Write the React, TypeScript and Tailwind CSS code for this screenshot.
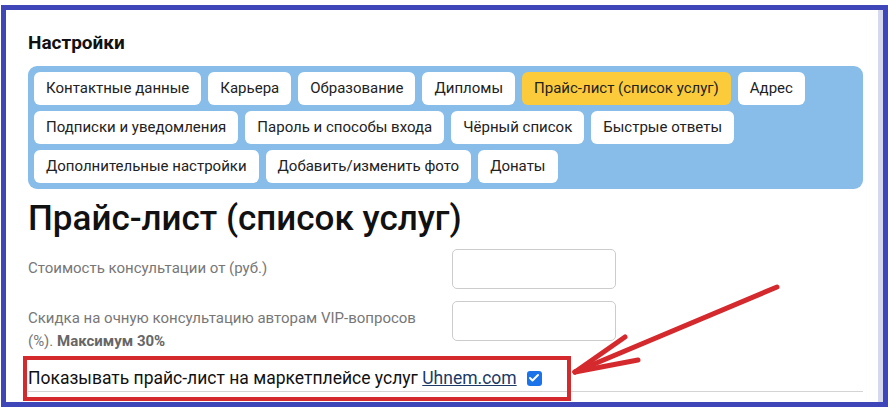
import { Check } from 'lucide-react';

const tabs = [
  ['Контактные данные', 'Карьера', 'Образование', 'Дипломы', 'Прайс-лист (список услуг)', 'Адрес'],
  ['Подписки и уведомления', 'Пароль и способы входа', 'Чёрный список', 'Быстрые ответы'],
  ['Дополнительные настройки', 'Добавить/изменить фото', 'Донаты'],
];

const active = 'Прайс-лист (список услуг)';

const App = () => {
  return (
    <div className="relative w-[888px] h-[407px] overflow-hidden bg-white font-['Roboto',sans-serif]">
      <div className="ml-[1px] mt-[5px] w-[887px] h-[402px] border-[5px] border-[#3f47b8] bg-white">
        <div className="h-full border-r-[5px] border-[#d6d8ee] pl-[22px] pr-[14px] pt-[20px]">
          <h2 className="text-[19px] font-bold text-[#111] leading-[26px]">Настройки</h2>

          {/* settings tabs */}
          <div className="mt-[10px] flex flex-col gap-[6px] rounded-[9px] bg-[#87bde8] p-[6px] w-[835px]">
            {tabs.map((row, i) => (
              <div key={i} className="flex gap-[7px]">
                {row.map((t) => (
                  <div
                    key={t}
                    className={
                      t === active
                        ? 'h-[33px] flex items-center rounded-[6px] bg-[#fbcb3c] px-[12px] text-[15px] text-[#222]'
                        : 'h-[33px] flex items-center rounded-[6px] bg-white px-[12px] text-[15px] text-[#222]'
                    }
                  >
                    {t}
                  </div>
                ))}
              </div>
            ))}
          </div>

          <h1 className="mt-[10px] text-[35px] font-medium leading-[40px] text-[#111]">Прайс-лист (список услуг)</h1>

          <div className="mt-[10px] flex w-[835px]">
            <div className="w-[424px] pt-[8px] text-[15px] leading-[22px] text-[#777]">
              Стоимость консультации от (руб.)
            </div>
            <input className="w-[164px] h-[40px] rounded-[5px] border border-[#ccc] bg-white" />
          </div>

          <div className="mt-[12px] flex w-[835px]">
            <div className="w-[424px] pt-[6px] text-[15px] leading-[23px] text-[#777]">
              <div>Скидка на очную консультацию авторам VIP-вопросов</div>
              <div>
                (%). <b className="text-[#666]">Максимум 30%</b>
              </div>
            </div>
            <input className="w-[164px] h-[40px] rounded-[5px] border border-[#ccc] bg-white" />
          </div>

          <div className="mt-[13px] flex w-[835px] items-center border-b border-[#d4d4d4] pb-[1px] text-[17.5px] leading-[24px] text-[#111]">
            <span>
              Показывать прайс-лист на маркетплейсе услуг{' '}
              <a className="text-[#1b3a66] underline">Uhnem.com</a>
            </span>
            <span className="ml-[10px] flex h-[15px] w-[15px] items-center justify-center rounded-[3px] bg-[#1a73e8]">
              <Check className="h-[12px] w-[12px] text-white" strokeWidth={4} />
            </span>
          </div>
        </div>
      </div>

      {/* highlight box and arrow */}
      <div className="absolute left-[23px] top-[356px] h-[45px] w-[548px] border-[4px] border-[#d42a2e]" />
      <svg className="absolute left-0 top-0" width="888" height="407" viewBox="0 0 888 407" fill="none">
        <g stroke="#d42a2e" strokeWidth="5" strokeLinecap="round">
          <path d="M777 287 L575 372" />
          <path d="M575 372 L625 337" />
          <path d="M575 372 L638 360" />
        </g>
      </svg>
    </div>
  );
};

export default App;
